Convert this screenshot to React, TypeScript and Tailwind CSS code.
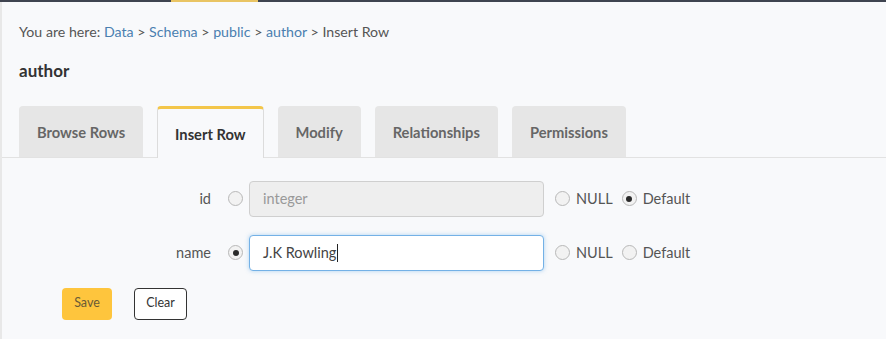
import React from 'react'

const font = { fontFamily: '"Lato", "Liberation Sans", sans-serif' }

function Radio({ checked }: { checked?: boolean }) {
  return (
    <span className="flex h-[15px] w-[15px] shrink-0 items-center justify-center rounded-full border border-[#b8b8b8] bg-[#f2f2f2]">
      {checked && <span className="h-[6px] w-[6px] rounded-full bg-[#2a2a2a]" />}
    </span>
  )
}

function Row({ label, value, placeholder, active }: { label: string; value?: string; placeholder?: string; active?: boolean }) {
  return (
    <div className="flex h-[36px] items-center text-[14.5px]">
      <span className="w-[209px] text-right text-[#555]">{label}</span>
      <span className="ml-[17px]"><Radio checked={active} /></span>
      <div
        className={
          active
            ? 'ml-[6px] flex h-[36px] w-[295px] items-center rounded-[4px] border border-[#74b1e6] bg-white px-[13px] text-[#444] shadow-[0_0_4px_rgba(102,175,233,0.5)]'
            : 'ml-[6px] flex h-[36px] w-[295px] items-center rounded-[4px] border border-[#cfcfcf] bg-[#eeeeee] px-[13px] text-[#999]'
        }
      >
        {value ?? placeholder}
        {active && <span className="ml-[1px] h-[18px] w-px bg-[#222]" />}
      </div>
      <span className="ml-[11px]"><Radio /></span>
      <span className="ml-[6px] text-[#555]">NULL</span>
      <span className="ml-[9px]"><Radio checked={!active} /></span>
      <span className="ml-[6px] text-[#555]">Default</span>
    </div>
  )
}

export default function App() {
  const tabs = ['Browse Rows', 'Insert Row', 'Modify', 'Relationships', 'Permissions']

  return (
    <div className="h-[339px] w-[886px] overflow-hidden bg-[#f8f9fb]" style={font}>
      <div className="flex h-[2px] bg-[#3f4450]">
        <div className="ml-[171px] w-[87px] bg-[#e9c463]" />
      </div>
      <div className="h-[337px] border-l-2 border-[#e8e8e8]">
        <div className="pl-[17px] pt-[19px] text-[14.2px] text-[#555]">
          You are here: <span className="text-[#4a7fb0]">Data</span> &gt;{' '}
          <span className="text-[#4a7fb0]">Schema</span> &gt; <span className="text-[#4a7fb0]">public</span> &gt;{' '}
          <span className="text-[#4a7fb0]">author</span> &gt; Insert Row
        </div>
        <h2 className="pl-[17px] pt-[16px] text-[17px] font-bold text-[#333]">author</h2>

        <div className="mt-[22px] flex gap-[14px] border-b border-[#e2e2e2] pl-[17px]">
          {tabs.map((t) =>
            t === 'Insert Row' ? (
              <div
                key={t}
                className="-mb-px flex h-[52px] items-center rounded-t-[4px] border-x border-t-[3px] border-x-[#dcdcdc] border-t-[#f3c64a] bg-[#f8f9fb] px-[17px] pt-[1px] text-[14.7px] font-bold text-[#333]"
              >
                {t}
              </div>
            ) : (
              <div
                key={t}
                className="flex h-[51px] items-center rounded-t-[4px] bg-[#e6e6e6] px-[18px] pt-[2px] text-[14.7px] font-bold text-[#666]"
              >
                {t}
              </div>
            )
          )}
        </div>

        <div className="flex flex-col gap-[18px] pt-[23px]">
          <Row label="id" placeholder="integer" />
          <Row label="name" value="J.K Rowling" active />
        </div>

        <div className="flex gap-[22px] pl-[60px] pt-[17px]">
          <button className="h-[32px] w-[50px] rounded-[4px] bg-[#fec53d] text-[12.5px] text-[#6a5a36]">Save</button>
          <button className="h-[32px] w-[53px] rounded-[4px] border border-[#333] bg-white text-[12.5px] text-[#333]">Clear</button>
        </div>
      </div>
    </div>
  )
}
